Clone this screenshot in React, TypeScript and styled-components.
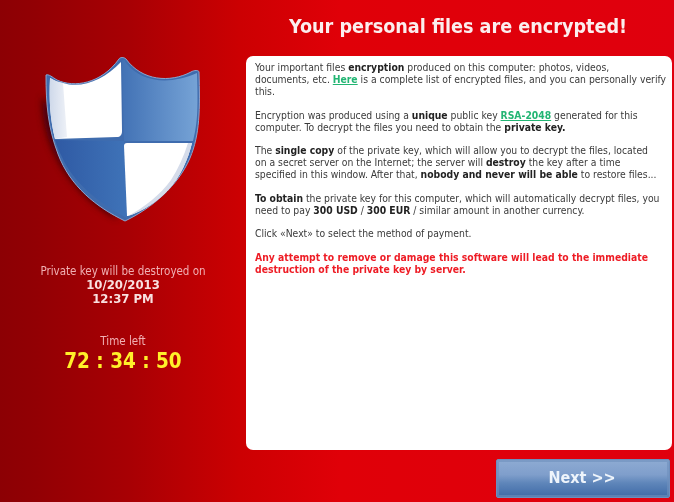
import styled, { createGlobalStyle } from 'styled-components';

const GlobalStyle = createGlobalStyle`
  html, body {
    margin: 0;
    padding: 0;
    background: #c00010;
  }
`;

const Page = styled.div`
  display: flex;
  width: 674px;
  height: 502px;
  overflow: hidden;
  font-family: 'DejaVu Sans Condensed', 'DejaVu Sans', Tahoma, sans-serif;
  background: linear-gradient(90deg, #8c0004 0%, #920004 35px, #a80004 130px, #cc0002 240px, #e00008 340px, #e0000e 100%);
`;

const Sidebar = styled.aside`
  display: flex;
  flex-direction: column;
  align-items: center;
  flex: 0 0 246px;
  padding-top: 50px;
  box-sizing: border-box;
  text-align: center;
  filter: blur(0.3px);
`;

const ShieldArt = styled.svg`
  display: block;
  width: 180px;
  height: 180px;
  filter: blur(0.4px);
`;

const DeadlineLabel = styled.div`
  margin-top: 34px;
  font-size: 11.5px;
  line-height: 14px;
  color: #f0b0b4;
`;

const DeadlineValue = styled.div`
  font-size: 13px;
  line-height: 14px;
  font-weight: 700;
  color: #f9e0e0;
`;

const TimeLabel = styled.div`
  margin-top: 28px;
  font-size: 11.5px;
  line-height: 14px;
  color: #f0b0b4;
`;

const Countdown = styled.div`
  font-size: 20.5px;
  line-height: 26px;
  font-weight: 700;
  color: #fff02a;
`;

const Main = styled.main`
  display: flex;
  flex-direction: column;
  flex: 1;
  min-width: 0;
  padding-right: 2px;
`;

const Title = styled.h1`
  height: 56px;
  margin: 0;
  padding-right: 2px;
  font-size: 19.6px;
  line-height: 53px;
  font-weight: 700;
  text-align: center;
  color: #fbeeee;
  filter: blur(0.3px);
`;

const Notice = styled.section`
  box-sizing: border-box;
  height: 394px;
  padding: 5px 8px 0 9px;
  border-radius: 7px;
  background: #ffffff;
  font-size: 10.3px;
  line-height: 12px;
  white-space: nowrap;
  color: #3a3a3a;
  filter: blur(0.3px);
`;

const Paragraph = styled.p`
  margin: 0 0 11.6px;
`;

const Warning = styled(Paragraph)`
  font-weight: 700;
  color: #ee1c25;
`;

const Strong = styled.b`
  font-weight: 700;
  color: #222222;
`;

const KeyLink = styled.a`
  font-weight: 700;
  color: #22b573;
  text-decoration: underline;
`;

const Footer = styled.div`
  display: flex;
  justify-content: flex-end;
  padding: 9px 2px 0 0;
`;

const NextButton = styled.button`
  width: 174px;
  height: 39px;
  padding: 0 2px 3px 0;
  border: 1px solid #6e8fbd;
  border-radius: 2px;
  background: linear-gradient(180deg, #8eabd3 0%, #7f9ecb 40%, #5f86ba 62%, #3f6aa6 100%);
  box-shadow: inset 0 0 0 2px rgba(110, 143, 189, 0.6);
  font-family: inherit;
  font-size: 16px;
  font-weight: 700;
  color: #eef4fb;
  filter: blur(0.3px);
`;

const Shield = () => (
  <ShieldArt viewBox="33 50 180 180" aria-hidden="true">
    <defs>
      <linearGradient id="blueRight" x1="0" x2="1" y1="0" y2="0">
        <stop offset="0" stopColor="#4272b5" />
        <stop offset="1" stopColor="#76a3d6" />
      </linearGradient>
      <linearGradient id="blueLeft" x1="0" x2="1" y1="0" y2="0">
        <stop offset="0" stopColor="#2f5aa4" />
        <stop offset="1" stopColor="#3f73b8" />
      </linearGradient>
      <linearGradient id="glossLeft" x1="0" x2="1" y1="0" y2="0">
        <stop offset="0" stopColor="#cfd9ea" />
        <stop offset="1" stopColor="#eef1f7" />
      </linearGradient>
      <filter id="softShadow" x="-20%" y="-20%" width="140%" height="140%">
        <feGaussianBlur stdDeviation="3" />
      </filter>
    </defs>
    <path
      d="M42 96 C40 140 64 190 118 220 L60 120 Z"
      fill="#4a0008"
      filter="url(#softShadow)"
    />
    <path
      d="M46 75 C49 74 52 77 57 80 C74 88 101 84 119 59 C120 57 124 57 126 59 C142 81 170 83 191 72 C194 70 199 70 199 72 C200 110 200 134 190 158 C178 186 152 208 125 221 C96 207 70 186 58 154 C48 128 46 104 46 75 Z"
      fill="#3f6cae"
      stroke="#8aa5cf"
      strokeWidth="1"
    />
    <path
      d="M122 61 C126 59 124 60 126 63 C142 83 170 85 197 73 C198 105 198 122 193 141 L124 141 Z"
      fill="url(#blueRight)"
    />
    <path
      d="M55 140 L124 141 L127 218 C98 203 73 182 62 157 C59 151 57 146 55 140 Z"
      fill="url(#blueLeft)"
    />
    <path
      d="M50 78 C54 80 58 83 63 83 C82 89 104 80 121 62 L122 131 C122 135 120 137 117 137 L55 139 C50 118 49 100 50 78 Z"
      fill="#ffffff"
    />
    <path
      d="M50 78 C54 80 58 82 63 83 L67 137 L55 139 C50 118 49 100 50 78 Z"
      fill="url(#glossLeft)"
    />
    <path
      d="M124 146 C124 144 125 143 127 143 L192 143 C188 160 180 177 169 189 C157 202 143 211 128 216 L127 216 Z"
      fill="#ffffff"
    />
    <path
      d="M188 143 L192 143 C188 160 180 177 169 189 C157 202 143 211 128 216 C145 207 160 195 171 180 C178 169 184 156 188 143 Z"
      fill="#d5dcea"
    />
  </ShieldArt>
);

export default function App() {
  return (
    <Page>
      <GlobalStyle />
      <Sidebar>
        <Shield />
        <DeadlineLabel>Private key will be destroyed on</DeadlineLabel>
        <DeadlineValue>10/20/2013</DeadlineValue>
        <DeadlineValue>12:37 PM</DeadlineValue>
        <TimeLabel>Time left</TimeLabel>
        <Countdown>72 : 34 : 50</Countdown>
      </Sidebar>
      <Main>
        <Title>Your personal files are encrypted!</Title>
        <Notice>
          <Paragraph>
            Your important files <Strong>encryption</Strong> produced on this computer: photos, videos,
            <br />
            documents, etc. <KeyLink>Here</KeyLink> is a complete list of encrypted files, and you can personally verify
            <br />
            this.
          </Paragraph>
          <Paragraph>
            Encryption was produced using a <Strong>unique</Strong> public key <KeyLink>RSA-2048</KeyLink> generated for this
            <br />
            computer. To decrypt the files you need to obtain the <Strong>private key.</Strong>
          </Paragraph>
          <Paragraph>
            The <Strong>single copy</Strong> of the private key, which will allow you to decrypt the files, located
            <br />
            on a secret server on the Internet; the server will <Strong>destroy</Strong> the key after a time
            <br />
            specified in this window. After that, <Strong>nobody and never will be able</Strong> to restore files...
          </Paragraph>
          <Paragraph>
            <Strong>To obtain</Strong> the private key for this computer, which will automatically decrypt files, you
            <br />
            need to pay <Strong>300 USD</Strong> / <Strong>300 EUR</Strong> / similar amount in another currency.
          </Paragraph>
          <Paragraph>Click «Next» to select the method of payment.</Paragraph>
          <Warning>
            Any attempt to remove or damage this software will lead to the immediate
            <br />
            destruction of the private key by server.
          </Warning>
        </Notice>
        <Footer>
          <NextButton type="button">Next &gt;&gt;</NextButton>
        </Footer>
      </Main>
    </Page>
  );
}
